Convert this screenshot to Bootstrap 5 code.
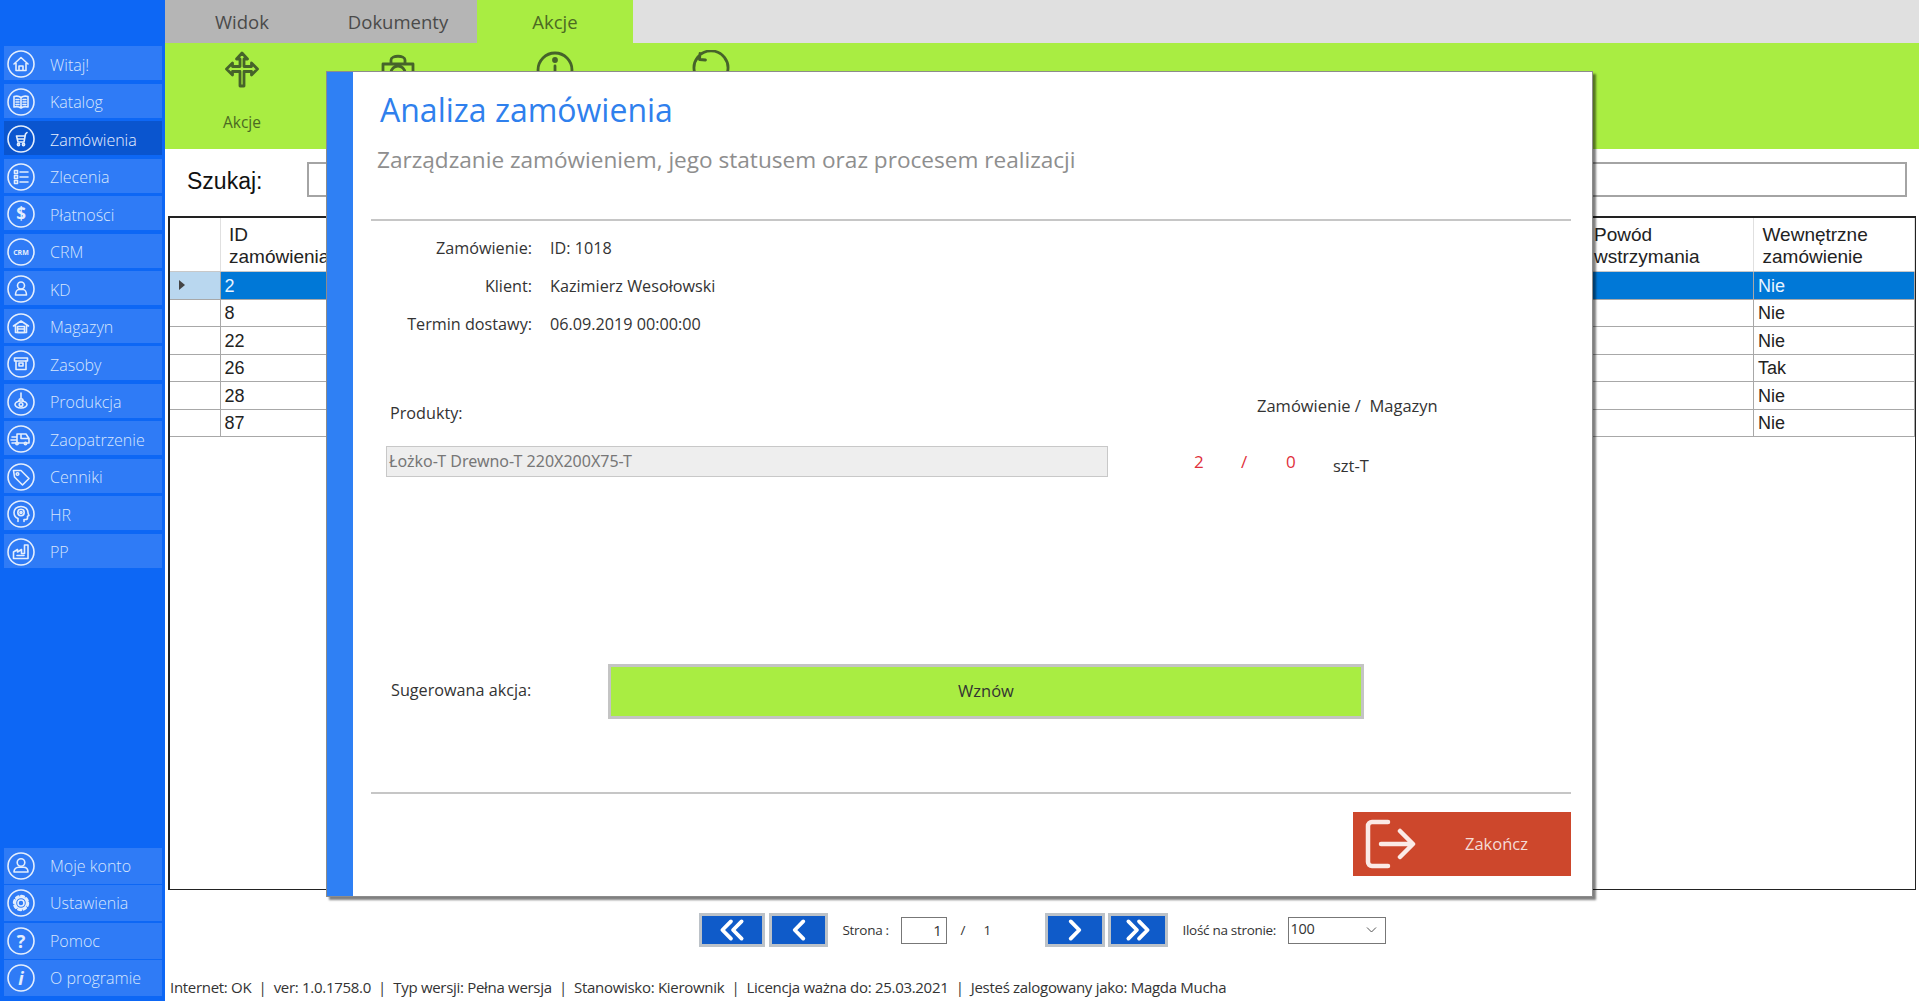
<!DOCTYPE html>
<html lang="pl">
<head>
    <meta charset="UTF-8">
    <title>Analiza zamówienia</title>
    <link rel="stylesheet" href="https://cdn.jsdelivr.net/npm/bootstrap@5.3.2/dist/css/bootstrap.min.css">
    <style>
        html, body { height: 100%; }
        body { width: 1919px; height: 1001px; overflow: hidden; font-family: "Open Sans", sans-serif; color: #333; background: #fff; }

        /* sidebar */
        .side-bar { width: 165px; background: #0d67f5; padding: 46px 3px 5px 4px; }
        .side-item { height: 34px; margin-bottom: 3.5px; padding-top: 3px; background: #2f7bf6; color: #d7e6fd; font-size: 16px; font-weight: 300; padding-left: 46px; }
        .side-item.is-on { background: #0a55cf; color: #e8f0fe; }
        .side-item:last-child { margin-bottom: 0; }
        .side-item.side-tall { height: 36px; margin-bottom: 1.5px; padding-top: 0; }
        .side-item.side-tall:last-child { margin-bottom: 0; }
        .side-ico { position: absolute; left: 3px; top: 4px; width: 28px; height: 28px; fill: none; stroke: #e4eefd; stroke-width: 1.6; stroke-linecap: round; stroke-linejoin: round; }
        .side-ico text { fill: #e4eefd; stroke: none; font-family: "Open Sans", sans-serif; font-weight: 700; text-anchor: middle; }

        /* tabs and ribbon */
        .tab-row { height: 43px; background: #e0e0e0; }
        .tab-btn { height: 43px; background: #b5b5b5; color: #4a4a4a; font-size: 18.5px; }
        .tab-btn.is-on { background: #a9ed42; color: #4c6a22; }
        .ribbon-row { height: 106px; background: #a9ed42; color: #4c6a22; }
        .ribbon-col { padding-top: 7px; font-size: 15.5px; }
        .ribbon-ico { width: 40px; height: 40px; fill: none; stroke: #46632a; stroke-width: 2.8; stroke-linejoin: round; stroke-linecap: round; }
        .ribbon-cap { margin-top: 21px; }

        /* search */
        .search-row { height: 67px; padding: 13px 12px 0 22px; }
        .search-lbl { width: 120px; font-family: "Liberation Sans", sans-serif; font-size: 23px; color: #111; }
        .search-box { height: 35px; border: 2px solid #a4a4a4; }

        /* grid */
        .grid-box { height: 674px; margin: 0 3px; border: 2px solid #222; border-right-width: 1px; border-bottom-width: 1.5px; }
        .order-grid { --bs-table-bg: transparent; margin: 0; table-layout: fixed; font-family: "Liberation Sans", sans-serif; font-size: 18px; color: #222; }
        .order-grid th, .order-grid td { padding: 1px 0 0 4px; height: 27px; line-height: 24px; font-weight: 400; vertical-align: middle; border-bottom: 1.5px solid #a8a8a8; border-right: 1px solid #a8a8a8; box-shadow: none; white-space: nowrap; overflow: hidden; }
        .order-grid tbody tr:nth-child(odd) td { height: 28px; }
        .order-grid th { height: 53px; padding: 3px 0 0 8.5px; font-size: 19px; line-height: 22px; border-bottom: 1px solid #c8c8c8; border-right: 1px solid #e0e0e0; white-space: normal; }
        .order-grid tr.is-sel td { background: #0078d7; color: #e8f4ff; }
        .order-grid tr.is-sel td.row-mark { background: #b9d7ef; }
        .order-grid td.row-mark { padding: 0; }
        .row-tri { display: block; margin-left: 9px; width: 0; height: 0; border-left: 6px solid #444; border-top: 5px solid transparent; border-bottom: 5px solid transparent; }

        /* pager */
        .pager-row { height: 80px; padding-left: 534px; font-size: 13.5px; letter-spacing: -.3px; color: #333; }
        .pager-btn { height: 34px; border: 3px solid #bcc2c8; background: #0f5bc9; padding: 0; }
        .pager-wide { width: 66px; }
        .pager-mid { width: 59px; margin-left: 4px; }
        .pager-side { width: 60px; }
        .pager-btn svg { width: 32px; height: 24px; fill: none; stroke: #fff; stroke-width: 3.6; stroke-linecap: round; stroke-linejoin: round; }
        .page-lbl { width: 58px; margin-left: 14.5px; }
        .page-input { width: 46px; height: 27px; border: 1px solid #777; text-align: right; padding-right: 4px; font-size: 15px; line-height: 25px; }
        .page-size { width: 98px; height: 27px; border: 1px solid #777; padding-left: 2px; font-size: 14.5px; line-height: 22px; }
        .size-lbl { width: 105px; margin-left: 15px; }
        .status-line { height: 31px; padding: 6px 0 0 5px; font-size: 15px; letter-spacing: -.3px; color: #333; white-space: nowrap; }

        /* dialog on top */
        .dlg { position: absolute; left: 326px; top: 71px; width: 1267px; height: 826px; background: #fff; border: 1px solid #8c8c8c; box-shadow: 3px 3px 2px rgba(0,0,0,.5); }
        .dlg-band { width: 26px; background: #2f80f4; }
        .dlg-body { padding: 0 21px 0 18px; font-size: 16.2px; color: #333; }
        .dlg-head { height: 147px; padding-top: 18px; }
        .dlg-title { font-size: 32px; line-height: 40px; color: #2f80ed; padding-left: 9px; font-weight: 400; margin: 0; }
        .dlg-sub { font-size: 22.6px; line-height: 30px; color: #8e8e8e; margin-top: 15px; padding-left: 6px; }
        .dlg-rule { height: 2px; background: #c6c6c6; }
        .info-wrap { padding-top: 8px; }
        .info-line { height: 38px; }
        .info-key { width: 161px; text-align: right; margin-right: 18px; }
        .prod-head { margin-top: 49px; height: 40px; padding-left: 19px; }
        .prod-title { width: 867px; padding-top: 3px; }
        .prod-ratio { padding-top: 2px; font-size: 16.5px; }
        .prod-line { margin-top: 14px; height: 31px; padding-left: 15px; }
        .prod-field { width: 722px; height: 31px; background: #eeeeee; border: 1px solid #c8c8c8; color: #777; font-size: 16px; line-height: 28px; padding-left: 2px; font-family: "Noto Sans", sans-serif; }
        .qty-red { color: #e0303a; font-size: 17px; }
        .qty-a { margin-left: 86px; width: 47px; }
        .qty-b { width: 45px; }
        .qty-c { width: 47px; }
        .qty-unit { padding-top: 10px; font-size: 16.5px; }
        .act-line { margin-top: 187px; height: 55px; padding-left: 20px; }
        .act-label { width: 217px; padding-bottom: 2px; }
        .act-btn { width: 756px; height: 55px; background: #a9ed42; border: 3px solid #c4c4c4; color: #333; font-size: 16.5px; padding: 0; border-radius: 0; }
        .foot-line { margin-top: 18px; }
        .quit-btn { width: 218px; height: 64px; background: #cd472c; color: #f5dcd6; border: 0; border-radius: 0; padding: 0 0 0 11px; font-size: 16.5px; }
        .quit-btn svg { width: 52px; height: 56px; fill: none; stroke: #fbeae6; stroke-width: 4.5; stroke-linecap: round; stroke-linejoin: round; }
        .quit-txt { margin-left: 49px; }
    </style>
</head>
<body class="d-flex position-relative">

<!-- left menu -->
<div class="side-bar d-flex flex-column justify-content-between flex-shrink-0">
    <div>
        <div class="side-item position-relative d-flex align-items-center">
            <svg class="side-ico" viewBox="0 0 28 28"><circle cx="14" cy="14" r="13"/><path d="M7 14l7-6.5 7 6.5M9 13v7.5h10V13M12 20.5v-4.500h4v4.500"/></svg>Witaj!</div>
        <div class="side-item position-relative d-flex align-items-center">
            <svg class="side-ico" viewBox="0 0 28 28"><circle cx="14" cy="14" r="13"/><path d="M7 8.500c3-.8 5-.5 7 1 2-1.500 4-1.800 7-1v10.500c-3-.8-5-.5-7 1-2-1.500-4-1.800-7-1zM14 9.500V20M9 11.500h3M9 14h3M9 16.500h3M16 11.500h3M16 14h3M16 16.500h3"/></svg>Katalog</div>
        <div class="side-item is-on position-relative d-flex align-items-center">
            <svg class="side-ico" viewBox="0 0 28 28"><circle cx="14" cy="14" r="13"/><path d="M20 7.500l-1.500 1.500-1.500 8h-6l-1.500-6h8.500M11 14h6"/><circle cx="11.500" cy="19.500" r="1.100"/><circle cx="16.500" cy="19.500" r="1.100"/></svg>Zamówienia</div>
        <div class="side-item position-relative d-flex align-items-center">
            <svg class="side-ico" viewBox="0 0 28 28"><circle cx="14" cy="14" r="13"/><path d="M13 9h8M13 14h8M13 19h8"/><rect x="7.500" y="7.500" width="3" height="3"/><rect x="7.500" y="12.500" width="3" height="3"/><rect x="7.500" y="17.500" width="3" height="3"/></svg>Zlecenia</div>
        <div class="side-item position-relative d-flex align-items-center">
            <svg class="side-ico" viewBox="0 0 28 28"><circle cx="14" cy="14" r="13"/><text x="14" y="20" font-size="17">$</text></svg>Płatności</div>
        <div class="side-item position-relative d-flex align-items-center">
            <svg class="side-ico" viewBox="0 0 28 28"><circle cx="14" cy="14" r="13"/><text x="14" y="16.500" font-size="7">CRM</text></svg>CRM</div>
        <div class="side-item position-relative d-flex align-items-center">
            <svg class="side-ico" viewBox="0 0 28 28"><circle cx="14" cy="14" r="13"/><circle cx="14" cy="10.500" r="3.500"/><path d="M8.500 20c0-3 1.500-5.500 3.500-5.500h4c2 0 3.500 2.500 3.500 5.500z"/></svg>KD</div>
        <div class="side-item position-relative d-flex align-items-center">
            <svg class="side-ico" viewBox="0 0 28 28"><circle cx="14" cy="14" r="13"/><path d="M6.500 13L14 8l7.500 5M8.500 12v7.500h11V12"/><rect x="10.500" y="13.500" width="7" height="6"/><path d="M10.500 16h7"/></svg>Magazyn</div>
        <div class="side-item position-relative d-flex align-items-center">
            <svg class="side-ico" viewBox="0 0 28 28"><circle cx="14" cy="14" r="13"/><rect x="7.500" y="8" width="13" height="3"/><path d="M9 11v8.500h10V11"/><rect x="12" y="13" width="4" height="3"/></svg>Zasoby</div>
        <div class="side-item position-relative d-flex align-items-center">
            <svg class="side-ico" viewBox="0 0 28 28"><circle cx="14" cy="14" r="13"/><path d="M14 5v6M12.500 11h3l.8 2h-4.600zM8 16.500c0-1.500 2-3.500 6-3.500s6 2 6 3.500-2 3.500-6 3.500-6-2-6-3.500z"/><circle cx="14" cy="16.500" r="1.800"/></svg>Produkcja</div>
        <div class="side-item position-relative d-flex align-items-center">
            <svg class="side-ico" viewBox="0 0 28 28"><circle cx="14" cy="14" r="13"/><path d="M10 9h9l3 4.500V18H5M10 9v9M5 12h5M4 15h6M14 9v4.500h8"/><circle cx="10" cy="18.500" r="1.200"/><circle cx="18.500" cy="18.500" r="1.200"/></svg>Zaopatrzenie</div>
        <div class="side-item position-relative d-flex align-items-center">
            <svg class="side-ico" viewBox="0 0 28 28"><circle cx="14" cy="14" r="13"/><path d="M6.500 7.500h7.500l8 8-6.500 6.500-8-8z"/><circle cx="10.500" cy="11" r="1.300"/></svg>Cenniki</div>
        <div class="side-item position-relative d-flex align-items-center">
            <svg class="side-ico" viewBox="0 0 28 28"><circle cx="14" cy="14" r="13"/><path d="M11 21.500v-3c-2.500-1-4-3.500-4-6 0-3.500 3-6 7-6s7 2.500 7 6c0 1 .5 2 1 3l-1.500.7V18c0 1-1 1.500-2 1.500H17v2"/><circle cx="14" cy="12.500" r="3.200"/><circle cx="14" cy="12.500" r="1"/></svg>HR</div>
        <div class="side-item position-relative d-flex align-items-center">
            <svg class="side-ico" viewBox="0 0 28 28"><circle cx="14" cy="14" r="13"/><path d="M6.500 20.500v-6.500l4-2.500v2.500l4-2.500v4h3V7h3.500v13.500zM10 17.500h7"/></svg>PP</div>
    </div>
    <div>
        <div class="side-item side-tall position-relative d-flex align-items-center">
            <svg class="side-ico" viewBox="0 0 28 28"><circle cx="14" cy="14" r="13"/><circle cx="14" cy="10.500" r="3.800"/><path d="M7 20c0-3 2-4.800 4.500-4.800h5c2.500 0 4.500 1.800 4.500 4.800z"/></svg>Moje konto</div>
        <div class="side-item side-tall position-relative d-flex align-items-center">
            <svg class="side-ico" viewBox="0 0 28 28"><circle cx="14" cy="14" r="13"/><circle cx="14" cy="14" r="3"/><circle cx="14" cy="14" r="7" stroke-width="2.400" stroke-dasharray="2.800 2.700"/><circle cx="14" cy="14" r="5.600"/></svg>Ustawienia</div>
        <div class="side-item side-tall position-relative d-flex align-items-center">
            <svg class="side-ico" viewBox="0 0 28 28"><circle cx="14" cy="14" r="13"/><text x="14" y="20.500" font-size="18">?</text></svg>Pomoc</div>
        <div class="side-item side-tall position-relative d-flex align-items-center">
            <svg class="side-ico" viewBox="0 0 28 28"><circle cx="14" cy="14" r="13"/><text x="14" y="20.500" font-size="18" font-style="italic">i</text></svg>O programie</div>
    </div>
</div>

<!-- main area -->
<div class="flex-grow-1 d-flex flex-column">
    <div class="tab-row d-flex">
        <div class="tab-btn d-flex align-items-center justify-content-center" style="width:154px">Widok</div>
        <div class="tab-btn d-flex align-items-center justify-content-center" style="width:158px">Dokumenty</div>
        <div class="tab-btn is-on d-flex align-items-center justify-content-center" style="width:156px">Akcje</div>
    </div>
    <div class="ribbon-row d-flex">
        <div class="ribbon-col d-flex flex-column align-items-center" style="width:154px">
            <svg class="ribbon-ico" viewBox="0 0 40 40"><path d="M20 3l5.500 6H22v7.500h7.500V13l6 6-6 6v-3.500H22V36h-4V21.500h-7.500V25l-6-6 6-6v3.500H18V9h-3.500z"/></svg>
            <div class="ribbon-cap">Akcje</div>
        </div>
        <div class="ribbon-col d-flex flex-column align-items-center" style="width:158px">
            <svg class="ribbon-ico" viewBox="0 0 40 40"><path d="M5 14h30v22H5zM13 14v-4c0-5 14-5 14 0v4"/><circle cx="20" cy="23" r="7"/></svg>
        </div>
        <div class="ribbon-col d-flex flex-column align-items-center" style="width:156px">
            <svg class="ribbon-ico" viewBox="0 0 40 40"><circle cx="20" cy="20" r="17"/><circle cx="20" cy="10" r="1.500"/><path d="M20 16v11"/></svg>
        </div>
        <div class="ribbon-col d-flex flex-column align-items-center" style="width:156px">
            <svg class="ribbon-ico" viewBox="0 0 40 40"><path d="M3.500 22a17 17 0 1 1 33 0M9 3.500l-.5 6 6 .5"/></svg>
        </div>
    </div>
    <div class="search-row d-flex align-items-start">
        <div class="search-lbl d-flex align-items-center h-100 pb-3">Szukaj:</div>
        <div class="search-box flex-grow-1"></div>
    </div>
    <div class="grid-box">
        <table class="table order-grid">
            <colgroup>
                <col style="width:50px"><col style="width:140px"><col><col style="width:168.500px"><col style="width:161px">
            </colgroup>
            <thead>
                <tr><th></th><th>ID<br>zamówienia</th><th></th><th>Powód<br>wstrzymania</th><th>Wewnętrzne<br>zamówienie</th></tr>
            </thead>
            <tbody>
                <tr class="is-sel"><td class="row-mark"><span class="row-tri"></span></td><td>2</td><td></td><td></td><td>Nie</td></tr>
                <tr><td class="row-mark"></td><td>8</td><td></td><td></td><td>Nie</td></tr>
                <tr><td class="row-mark"></td><td>22</td><td></td><td></td><td>Nie</td></tr>
                <tr><td class="row-mark"></td><td>26</td><td></td><td></td><td>Tak</td></tr>
                <tr><td class="row-mark"></td><td>28</td><td></td><td></td><td>Nie</td></tr>
                <tr><td class="row-mark"></td><td>87</td><td></td><td></td><td>Nie</td></tr>
            </tbody>
        </table>
    </div>
    <div class="pager-row d-flex align-items-center">
        <button class="pager-btn pager-wide" type="button"><svg viewBox="0 0 30 22"><path d="M14 3l-8 8 8 8M24 3l-8 8 8 8"/></svg></button>
        <button class="pager-btn pager-mid" type="button"><svg viewBox="0 0 30 22"><path d="M19 3l-8 8 8 8"/></svg></button>
        <span class="page-lbl">Strona :</span>
        <div class="page-input">1</div>
        <span style="margin-left:14px;width:9px">/</span>
        <span style="margin-left:14px;width:8px">1</span>
        <button class="pager-btn pager-side" style="margin-left:53px" type="button"><svg viewBox="0 0 30 22"><path d="M11 3l8 8-8 8"/></svg></button>
        <button class="pager-btn pager-side" style="margin-left:3px" type="button"><svg viewBox="0 0 30 22"><path d="M6 3l8 8-8 8M16 3l8 8-8 8"/></svg></button>
        <span class="size-lbl">Ilość na stronie:</span>
        <div class="page-size d-flex justify-content-between">100
            <svg class="me-2 mt-2" width="11" height="8" viewBox="0 0 11 8" fill="none" stroke="#555"><path d="M1 1.500l4.500 4.500L10 1.500"/></svg>
        </div>
    </div>
    <div class="status-line">Internet: OK &nbsp;|&nbsp; ver: 1.0.1758.0 &nbsp;|&nbsp; Typ wersji: Pełna wersja &nbsp;|&nbsp; Stanowisko: Kierownik &nbsp;|&nbsp; Licencja ważna do: 25.03.2021 &nbsp;|&nbsp; Jesteś zalogowany jako: Magda Mucha</div>
</div>

<!-- dialog -->
<div class="dlg d-flex">
    <div class="dlg-band flex-shrink-0"></div>
    <div class="dlg-body flex-grow-1 d-flex flex-column">
        <div class="dlg-head">
            <h1 class="dlg-title">Analiza zamówienia</h1>
            <div class="dlg-sub">Zarządzanie zamówieniem, jego statusem oraz procesem realizacji</div>
        </div>
        <div class="dlg-rule"></div>
        <div class="info-wrap">
            <div class="info-line d-flex align-items-center"><div class="info-key">Zamówienie:</div><div>ID: 1018</div></div>
            <div class="info-line d-flex align-items-center"><div class="info-key">Klient:</div><div>Kazimierz Wesołowski</div></div>
            <div class="info-line d-flex align-items-center"><div class="info-key">Termin dostawy:</div><div>06.09.2019 00:00:00</div></div>
        </div>
        <div class="prod-head d-flex">
            <div class="prod-title align-self-center">Produkty:</div>
            <div class="prod-ratio">Zamówienie / &nbsp;Magazyn</div>
        </div>
        <div class="prod-line d-flex align-items-center">
            <div class="prod-field">Łożko-T Drewno-T 220X200X75-T</div>
            <span class="qty-red qty-a">2</span>
            <span class="qty-red qty-b">/</span>
            <span class="qty-red qty-c">0</span>
            <span class="qty-unit">szt-T</span>
        </div>
        <div class="act-line d-flex align-items-center">
            <div class="act-label">Sugerowana akcja:</div>
            <button class="btn act-btn" type="button">Wznów</button>
        </div>
        <div class="dlg-rule" style="margin-top:73px"></div>
        <div class="foot-line d-flex justify-content-end">
            <button class="btn quit-btn d-flex align-items-center" type="button">
                <svg viewBox="0 0 52 56"><path d="M24 6H8a4 4 0 0 0-4 4v36a4 4 0 0 0 4 4h16M17 28h31M36 15l13 13-13 13"/></svg>
                <span class="quit-txt">Zakończ</span>
            </button>
        </div>
    </div>
</div>

<script src="https://cdn.jsdelivr.net/npm/bootstrap@5.3.2/dist/js/bootstrap.bundle.min.js"></script>
</body>
</html>
